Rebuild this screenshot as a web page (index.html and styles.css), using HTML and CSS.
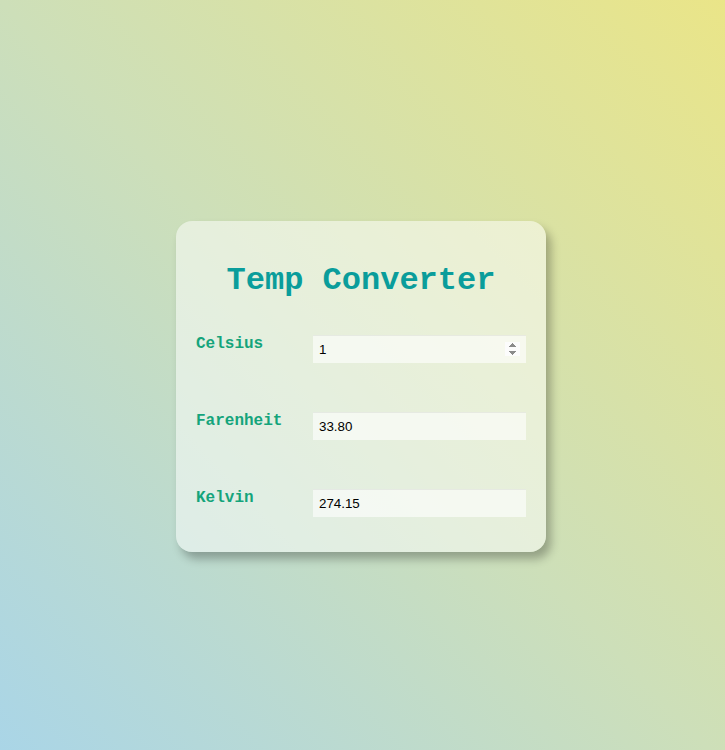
FILE: index.html
```html
<!DOCTYPE html>
<html lang="en">
<head>
<meta charset="utf-8">
<title>Temp Converter</title>
<link rel="stylesheet" href="styles.css">
</head>
<body>
  <main class="card">
    <h1 class="title">Temp Converter</h1>
    <div class="rows">
      <div class="row">
        <label class="label" for="c">Celsius</label>
        <input class="field" id="c" type="number" value="1" autofocus>
      </div>
      <div class="row">
        <label class="label" for="f">Farenheit</label>
        <input class="field" id="f" type="text" value="33.80">
      </div>
      <div class="row">
        <label class="label" for="k">Kelvin</label>
        <input class="field" id="k" type="text" value="274.15">
      </div>
    </div>
  </main>
</body>
</html>
```
FILE: styles.css
```css
body {
  margin: 8px;
  padding-right: 3px;
  min-height: 100vh;
  display: flex;
  align-items: center;
  justify-content: center;
  background: linear-gradient(to top right, #a9d5e8, #cddfb9 50%, #eae588);
  font-family: "Liberation Mono", monospace;
}

.card {
  width: 370px;
  box-sizing: border-box;
  padding: 42px 20px 35px;
  border-radius: 16px;
  background: rgba(255, 255, 255, 0.5);
  box-shadow: 5px 7px 10px rgba(0, 0, 0, 0.28);
  margin-top: 6px;
}

.title {
  margin: 0;
  font-size: 32px;
  line-height: 36px;
  font-weight: bold;
  text-align: center;
  color: #0a9d9b;
}

.rows {
  margin-top: 36px;
  display: flex;
  flex-direction: column;
  gap: 49px;
}

.row {
  display: flex;
  align-items: flex-start;
}

.label {
  width: 117px;
  flex: none;
  font-size: 16px;
  line-height: 18px;
  font-weight: bold;
  color: #14a47b;
}

.field {
  width: 213px;
  height: 28px;
  box-sizing: border-box;
  padding: 0 6px;
  border: none;
  border-top: 1px solid rgba(0, 0, 0, 0.06);
  background: rgba(255, 255, 255, 0.6);
  font-family: "Liberation Sans", Arial, sans-serif;
  font-size: 13.33px;
  color: #000;
  outline: none;
}
```
